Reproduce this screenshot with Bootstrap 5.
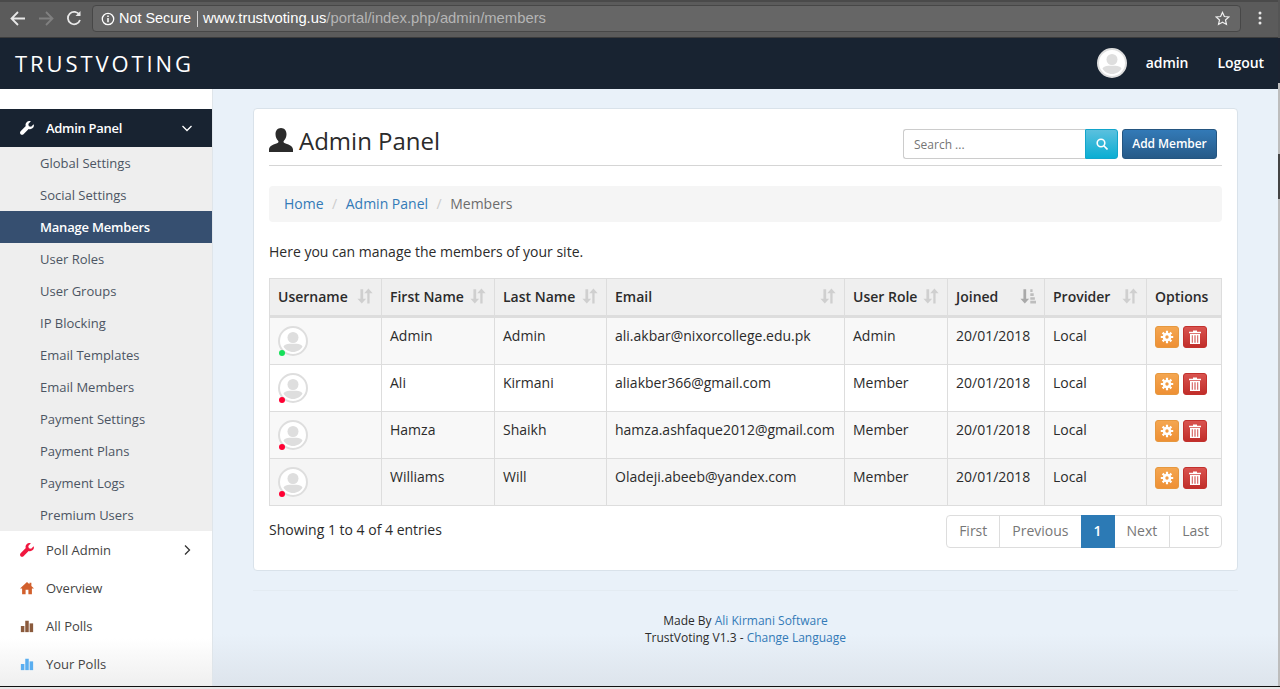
<!DOCTYPE html>
<html lang="en">
<head>
  <meta charset="UTF-8">
  <title>TrustVoting - Members</title>
  <link href="https://cdn.jsdelivr.net/npm/bootstrap@5.3.0/dist/css/bootstrap.min.css" rel="stylesheet" crossorigin="anonymous"/>
  <style>
    html, body { height: 689px; overflow: hidden; }
    body { font-family: "Open Sans", sans-serif; font-size: 14px; color: #2b2b2b; background: #e9f1f9; position: relative; }
    a { text-decoration: none; color: #337ab7; }

    /* browser chrome */
    .browser-bar { height: 38px; background: #5b5b5b; border-top: 2px solid #4a4a4a; border-bottom: 1px solid #3c3c3c; padding: 3px 0 0 0; }
    .browser-nav { width: 92px; padding-left: 10px; gap: 12px; }
    .address-bar { width: 1149px; height: 27px; background: #666; border: 1px solid #474747; border-radius: 4px; font-family: "Liberation Sans", sans-serif; font-size: 14.4px; color: #fff; padding: 0 6px 0 4px; }
    .address-bar .sep { width: 1px; height: 16px; background: #cfcfcf; margin: 0 5.5px; }
    .address-bar .url-text { font-size: 14.8px; }
    .address-bar .dim { color: #b5b5b5; }
    .window-scroll { position: absolute; top: 0; right: 0; width: 2px; height: 686px; background: linear-gradient(#555 0, #555 38px, #1a2230 38px, #1a2230 83px, #bdbdbd 83px, #bdbdbd 154px, #444 154px, #444 199px, #bdbdbd 199px); }

    /* top navbar */
    .top-nav { height: 51px; background: #182331; color: #fff; padding: 0 16px 0 15px; }
    .brand-name { font-size: 22px; letter-spacing: 2.9px; font-weight: 500; color: #fff; }
    .nav-avatar { width: 30px; height: 30px; margin-right: 19px; margin-top: -2px; }
    .nav-user { font-weight: 600; font-size: 14px; color: #fff; margin-top: -2px; letter-spacing: -.05px; }
    .nav-user + .nav-user { margin-left: 29px; }

    /* sidebar */
    .app-body { height: 597px; }
    .side-menu { width: 213px; flex: none; background: linear-gradient(#fff 92%, #efefef); border-right: 1px solid #dfe5ea; padding-top: 20px; font-size: 13px; color: #444; }
    .side-head { height: 38px; background: #182331; color: #fff; font-weight: 600; padding: 0 20px; letter-spacing: -.3px; line-height: 20px; }
    .side-item span { position: relative; top: 1px; }
    .side-head svg:first-child, .side-item svg:first-child { width: 14px; height: 14px; margin-right: 12px; flex: none; }
    .side-sub { background: #eee; }
    .side-sub a { display: block; height: 32px; line-height: 32px; padding-left: 40px; color: #4c5563; }
    .side-sub a.current { background: #364f70; color: #fff; font-weight: 600; letter-spacing: -.2px; }
    .side-item { height: 38px; padding: 0 20px; color: #444; }
    .side-caret { margin-left: auto; width: 10px; height: 10px; }

    /* main panel */
    .main-area { width: 1067px; padding: 19px 0 0 40px; background: linear-gradient(#e9f1f9 545px, #dde4ec 597px); }
    .panel-box { width: 985px; height: 463px; background: #fff; border: 1px solid #d9e2ea; border-radius: 4px; padding: 15px; }
    .panel-head { height: 42px; border-bottom: 1px solid #d5d5d5; padding-right: 5px; }
    .panel-title { font-size: 24px; font-weight: 400; color: #2b2b2b; margin: 0; line-height: 34px; }
    .panel-title svg { width: 24px; height: 24px; margin-right: 6px; vertical-align: -2px; }
    .search-input { width: 182px; height: 30px; border: 1px solid #ccc; border-right: 0; border-radius: 3px 0 0 3px; font-size: 12px; padding: 0 10px; color: #999; background: #fff; }
    .search-btn { width: 33px; height: 30px; border: 1px solid #12a5cb; border-radius: 0 3px 3px 0; background: linear-gradient(#5bc0de, #0aaed3); padding: 0 0 3px; }
    .search-btn svg { width: 12px; height: 12px; }
    .add-btn { height: 30px; margin-left: 4px; width: 95px; padding: 0; font-size: 12px; font-weight: 600; letter-spacing: -.05px; color: #fff; border: 1px solid #245580; border-radius: 3px; background: linear-gradient(#337ab7, #265a88); }
    .search-row { padding-top: 5px; }
    .crumbs { height: 36px; margin: 20px 0 20px; background: #f5f5f5; border-radius: 4px; padding: 0 15px 2px; }
    .crumbs .breadcrumb { margin: 0; }
    .crumbs .breadcrumb-item { font-size: 14px; }
    .crumbs .breadcrumb-item.active { color: #6c6c6c; }
    .crumbs .breadcrumb-item + .breadcrumb-item { padding-left: 8.5px; }
    .crumbs .breadcrumb-item + .breadcrumb-item::before { color: #ccc; padding-right: 8.5px; }
    .intro-text { margin: 0 0 16px; line-height: 20px; }

    /* members table */
    .members-table { table-layout: fixed; width: 952px; margin: 0; border-color: #ddd; font-size: 14px; color: #2b2b2b; }
    .members-table th { background: #efefef; height: 38px; padding: 0 8px 2px; border-bottom: 3px solid #ddd; font-weight: 600; vertical-align: middle; }
    .members-table td { height: 47px; padding: 8px; vertical-align: top; line-height: 20px; }
    .members-table tbody tr:nth-child(odd) td { background: #f8f8f8; }
    .members-table tbody tr:nth-child(even) td { background: #fff; }
    .members-table tbody tr:last-child td { background: #f5f5f5; }
    .c-user { width: 112px; } .c-first { width: 113px; } .c-last { width: 112px; } .c-mail { width: 238px; }
    .c-role { width: 103px; } .c-join { width: 97px; } .c-prov { width: 102px; } .c-opt { width: 75px; }
    .sort-icon { width: 16px; height: 16px; flex: none; }
    .user-pic { position: relative; display: block; width: 30px; height: 30px; }
    .user-pic svg { width: 30px; height: 30px; display: block; }
    .status-dot { position: absolute; left: 1px; bottom: 0; width: 6px; height: 6px; border-radius: 50%; background: #ff0033; }
    .status-dot.online { background: #16e05a; }
    .opt-btn { width: 24px; height: 22px; border-radius: 3px; padding: 0; margin-right: 4px; line-height: 1; }
    .opt-btn svg { width: 14px; height: 14px; vertical-align: -2px; }
    .opt-gear { background: linear-gradient(#f4a650, #ee9035); border: 1px solid #e6983f; }
    .opt-trash { background: linear-gradient(#d9534f, #c12e2a); border: 1px solid #c2312d; }

    .entries-row { margin-top: 9px; }
    .entries-row .pagination { margin: 0; --bs-pagination-border-radius: 4px; }
    .entries-row .page-link { height: 33px; line-height: 29px; padding: 0 12px; font-size: 14px; color: #777; border-color: #ddd; }
    .entries-row .page-item.active .page-link { background: #2c7ab5; border-color: #2c7ab5; color: #fff; font-weight: 600; padding: 0 12px; }
    .entries-text { margin-top: 4px; }

    .page-foot { width: 985px; margin-top: 19px; border-top: 1px solid #e3ebf2; padding-top: 21px; text-align: center; font-size: 12px; line-height: 17px; color: #2b2b2b; }
    .window-edge { height: 3px; background: #e6e6e6; border-top: 1px solid #111; }
  </style>
</head>
<body>

<svg width="0" height="0" class="position-absolute">
  <symbol id="i-wrench" viewBox="0 0 16 16"><path d="M15.6 3.6l-2.9 2.9-2.6-.6-.6-2.6L12.4.4c-1.6-.7-3.5-.4-4.8.9-1.3 1.3-1.6 3-1 4.5L.7 11.7c-.9.9-.9 2.4 0 3.3s2.4.9 3.3 0l5.9-5.9c1.6.6 3.4.3 4.7-1 1.3-1.3 1.6-3.1 1-4.5z"/></symbol>
  <symbol id="i-home" viewBox="0 0 16 16"><path d="M8 1L0 8.6h2.4V15h4V10h3.2v5h4V8.6H16L13 5.7V2h-2.2v1.600z"/></symbol>
  <symbol id="i-bars" viewBox="0 0 16 16"><rect x="1" y="8" width="4" height="7"/><rect x="6" y="2" width="4" height="13"/><rect x="11" y="5" width="4" height="10"/></symbol>
  <symbol id="i-user" viewBox="0 0 24 24"><path d="M12 0c3.5 0 5.5 2.800 5.500 6.200 0 2.700-1.200 5.200-2.600 6.500-.6.600-.5 1.800.5 2.300 3 1.400 8.600 2.500 8.600 6.500V24H0v-2.500c0-4 5.600-5.100 8.600-6.500 1-.5 1.100-1.700.5-2.300C7.700 11.400 6.500 8.900 6.500 6.200 6.500 2.800 8.500 0 12 0z"/></symbol>
  <symbol id="i-avatar" viewBox="0 0 30 30"><circle cx="15" cy="15" r="14" fill="#fff" stroke="#dedede" stroke-width="2"/><circle cx="15" cy="11.5" r="5.5" fill="#dedede"/><path d="M5.500 20.500c1-2 3.500-2.800 6-2.800h7c2.500 0 5 .8 6 2.800-1.800 3.200-5.500 5.500-9.500 5.500s-7.700-2.300-9.500-5.500z" fill="#dedede"/></symbol>
  <symbol id="i-sort" viewBox="0 0 14 14"><path fill="#cfcfcf" d="M3 1h2.400v8.500H8L4.200 13.500.4 9.500H3zM9 4.500H6.300L10 .5l3.700 4H11v9H9z"/></symbol>
  <symbol id="i-sorted" viewBox="0 0 14 14"><path fill="#a9a9a9" d="M3 1h2.400v8.500H8L4.200 13.500.4 9.500H3z"/><path fill="#bdbdbd" d="M9 1h2v2.500H9zM9 4.500h3v2.500H9zM9 8h4v2.200H9zM9 11.200h5v2.300H9z"/></symbol>
  <symbol id="i-gear" viewBox="0 0 14 14"><circle cx="7" cy="7" r="3" fill="none" stroke="#fff" stroke-width="2.600"/><g stroke="#fff" stroke-width="2.200"><path d="M7 .8v2.400M7 10.800v2.400M.8 7h2.400M10.800 7h2.400M2.600 2.600l1.700 1.700M9.700 9.700l1.700 1.700M2.600 11.400l1.700-1.700M9.700 4.300l1.700-1.700"/></g></symbol>
  <symbol id="i-trash" viewBox="0 0 14 14"><path fill="#fff" d="M5 .5h4v1.200h4v1.500H1V1.700h4zM2 4h10v10H2zm1.800 1.300v7.400h.9V5.300zm2.700 0v7.400h1V5.300zm2.800 0v7.400h.9V5.300z" fill-rule="evenodd"/></symbol>
</svg>

<div class="browser-bar d-flex align-items-start">
  <div class="browser-nav d-flex align-items-center">
    <svg width="16" height="27" viewBox="0 0 16 27" fill="none" stroke="#e8e8e8" stroke-width="1.800"><path d="M15 13.500H2M8 7l-6.500 6.500L8 20"/></svg>
    <svg width="16" height="27" viewBox="0 0 16 27" fill="none" stroke="#808080" stroke-width="1.800"><path d="M1 13.500h13M8 7l6.500 6.500L8 20"/></svg>
    <svg width="16" height="27" viewBox="0 0 16 27" fill="none" stroke="#e8e8e8" stroke-width="1.800"><path d="M13.500 10A6.200 6.200 0 1 0 14 15"/><path d="M14.500 6v5h-5" fill="#e8e8e8" stroke="none"/></svg>
  </div>
  <div class="address-bar d-flex align-items-center">
    <svg width="14" height="14" viewBox="0 0 14 14" fill="none" stroke="#fff" class="ms-1 me-1"><circle cx="7" cy="7" r="5.700" stroke-width="1.300"/><path d="M7 6v4.200M7 3.600v1.400" stroke-width="1.500"/></svg>
    <span>Not Secure</span><span class="sep"></span><span class="url-text">www.trustvoting.us<span class="dim">/portal/index.php/admin/members</span></span>
    <svg class="ms-auto me-1" width="15" height="15" viewBox="0 0 16 16" fill="none" stroke="#eee" stroke-width="1.300"><path d="M8 1.500l2 4.400 4.800.5-3.600 3.200 1 4.700L8 11.900l-4.200 2.400 1-4.700L1.200 6.400 6 5.900z"/></svg>
  </div>
  <svg class="ms-2" width="20" height="27" viewBox="0 0 20 27" fill="#e8e8e8"><circle cx="11" cy="8" r="1.500"/><circle cx="11" cy="13" r="1.500"/><circle cx="11" cy="18" r="1.500"/></svg>
</div>

<nav class="top-nav d-flex align-items-center">
  <a class="brand-name" href="#">TRUSTVOTING</a>
  <svg class="nav-avatar ms-auto"><use href="#i-avatar"/></svg>
  <a class="nav-user" href="#">admin</a>
  <a class="nav-user" href="#">Logout</a>
</nav>

<div class="app-body d-flex">
  <aside class="side-menu">
    <div class="side-head d-flex align-items-center">
      <svg fill="#fff"><use href="#i-wrench"/></svg>
      <span>Admin Panel</span>
      <svg class="side-caret" viewBox="0 0 10 10" fill="none" stroke="#fff" stroke-width="1.300"><path d="M.5 3l4.500 4.500L9.500 3"/></svg>
    </div>
    <div class="side-sub">
      <a href="#">Global Settings</a>
      <a href="#">Social Settings</a>
      <a href="#" class="current">Manage Members</a>
      <a href="#">User Roles</a>
      <a href="#">User Groups</a>
      <a href="#">IP Blocking</a>
      <a href="#">Email Templates</a>
      <a href="#">Email Members</a>
      <a href="#">Payment Settings</a>
      <a href="#">Payment Plans</a>
      <a href="#">Payment Logs</a>
      <a href="#">Premium Users</a>
    </div>
    <div class="side-item d-flex align-items-center">
      <svg fill="#f0173f"><use href="#i-wrench"/></svg>
      <span>Poll Admin</span>
      <svg class="side-caret" viewBox="0 0 10 10" fill="none" stroke="#333" stroke-width="1.300"><path d="M3 .5L7.500 5 3 9.500"/></svg>
    </div>
    <div class="side-item d-flex align-items-center"><svg fill="#d2602d"><use href="#i-home"/></svg><span>Overview</span></div>
    <div class="side-item d-flex align-items-center"><svg fill="#8a5a3c"><use href="#i-bars"/></svg><span>All Polls</span></div>
    <div class="side-item d-flex align-items-center"><svg fill="#5aaef0"><use href="#i-bars"/></svg><span>Your Polls</span></div>
  </aside>

  <main class="main-area">
    <div class="panel-box">
      <div class="panel-head d-flex justify-content-between align-items-start">
        <h1 class="panel-title"><svg fill="#2b2b2b"><use href="#i-user"/></svg>Admin Panel</h1>
        <div class="d-flex search-row">
          <input class="search-input" type="text" placeholder="Search ...">
          <button class="search-btn" type="button"><svg viewBox="0 0 12 12" fill="none" stroke="#fff" stroke-width="1.600"><circle cx="5" cy="5" r="3.800"/><path d="M7.800 7.800L11.500 11.500"/></svg></button>
          <button class="add-btn" type="button">Add Member</button>
        </div>
      </div>

      <nav class="crumbs d-flex align-items-center">
        <ol class="breadcrumb">
          <li class="breadcrumb-item"><a href="#">Home</a></li>
          <li class="breadcrumb-item"><a href="#">Admin Panel</a></li>
          <li class="breadcrumb-item active">Members</li>
        </ol>
      </nav>

      <p class="intro-text">Here you can manage the members of your site.</p>

      <table class="table table-bordered members-table">
        <colgroup>
          <col class="c-user"><col class="c-first"><col class="c-last"><col class="c-mail"><col class="c-role"><col class="c-join"><col class="c-prov"><col class="c-opt">
        </colgroup>
        <thead>
          <tr>
            <th><div class="d-flex justify-content-between align-items-center">Username <svg class="sort-icon"><use href="#i-sort"/></svg></div></th>
            <th><div class="d-flex justify-content-between align-items-center">First Name <svg class="sort-icon"><use href="#i-sort"/></svg></div></th>
            <th><div class="d-flex justify-content-between align-items-center">Last Name <svg class="sort-icon"><use href="#i-sort"/></svg></div></th>
            <th><div class="d-flex justify-content-between align-items-center">Email <svg class="sort-icon"><use href="#i-sort"/></svg></div></th>
            <th><div class="d-flex justify-content-between align-items-center">User Role <svg class="sort-icon"><use href="#i-sort"/></svg></div></th>
            <th><div class="d-flex justify-content-between align-items-center">Joined <svg class="sort-icon"><use href="#i-sorted"/></svg></div></th>
            <th><div class="d-flex justify-content-between align-items-center">Provider <svg class="sort-icon"><use href="#i-sort"/></svg></div></th>
            <th>Options</th>
          </tr>
        </thead>
        <tbody>
          <tr>
            <td><span class="user-pic"><svg><use href="#i-avatar"/></svg><span class="status-dot online"></span></span></td>
            <td>Admin</td><td>Admin</td><td>ali.akbar@nixorcollege.edu.pk</td><td>Admin</td><td>20/01/2018</td><td>Local</td>
            <td><button class="opt-btn opt-gear" type="button"><svg><use href="#i-gear"/></svg></button><button class="opt-btn opt-trash" type="button"><svg><use href="#i-trash"/></svg></button></td>
          </tr>
          <tr>
            <td><span class="user-pic"><svg><use href="#i-avatar"/></svg><span class="status-dot"></span></span></td>
            <td>Ali</td><td>Kirmani</td><td>aliakber366@gmail.com</td><td>Member</td><td>20/01/2018</td><td>Local</td>
            <td><button class="opt-btn opt-gear" type="button"><svg><use href="#i-gear"/></svg></button><button class="opt-btn opt-trash" type="button"><svg><use href="#i-trash"/></svg></button></td>
          </tr>
          <tr>
            <td><span class="user-pic"><svg><use href="#i-avatar"/></svg><span class="status-dot"></span></span></td>
            <td>Hamza</td><td>Shaikh</td><td>hamza.ashfaque2012@gmail.com</td><td>Member</td><td>20/01/2018</td><td>Local</td>
            <td><button class="opt-btn opt-gear" type="button"><svg><use href="#i-gear"/></svg></button><button class="opt-btn opt-trash" type="button"><svg><use href="#i-trash"/></svg></button></td>
          </tr>
          <tr>
            <td><span class="user-pic"><svg><use href="#i-avatar"/></svg><span class="status-dot"></span></span></td>
            <td>Williams</td><td>Will</td><td>Oladeji.abeeb@yandex.com</td><td>Member</td><td>20/01/2018</td><td>Local</td>
            <td><button class="opt-btn opt-gear" type="button"><svg><use href="#i-gear"/></svg></button><button class="opt-btn opt-trash" type="button"><svg><use href="#i-trash"/></svg></button></td>
          </tr>
        </tbody>
      </table>

      <div class="entries-row d-flex justify-content-between align-items-start">
        <div class="entries-text">Showing 1 to 4 of 4 entries</div>
        <ul class="pagination">
          <li class="page-item"><a class="page-link" href="#">First</a></li>
          <li class="page-item"><a class="page-link" href="#">Previous</a></li>
          <li class="page-item active"><a class="page-link" href="#">1</a></li>
          <li class="page-item"><a class="page-link" href="#">Next</a></li>
          <li class="page-item"><a class="page-link" href="#">Last</a></li>
        </ul>
      </div>
    </div>

    <footer class="page-foot">
      Made By <a href="#">Ali Kirmani Software</a><br>
      TrustVoting V1.3 - <a href="#">Change Language</a>
    </footer>
  </main>
</div>
<div class="window-edge"></div>
<div class="window-scroll"></div>

<script src="https://cdn.jsdelivr.net/npm/bootstrap@5.3.0/dist/js/bootstrap.bundle.min.js" crossorigin="anonymous"></script>
</body>
</html>
